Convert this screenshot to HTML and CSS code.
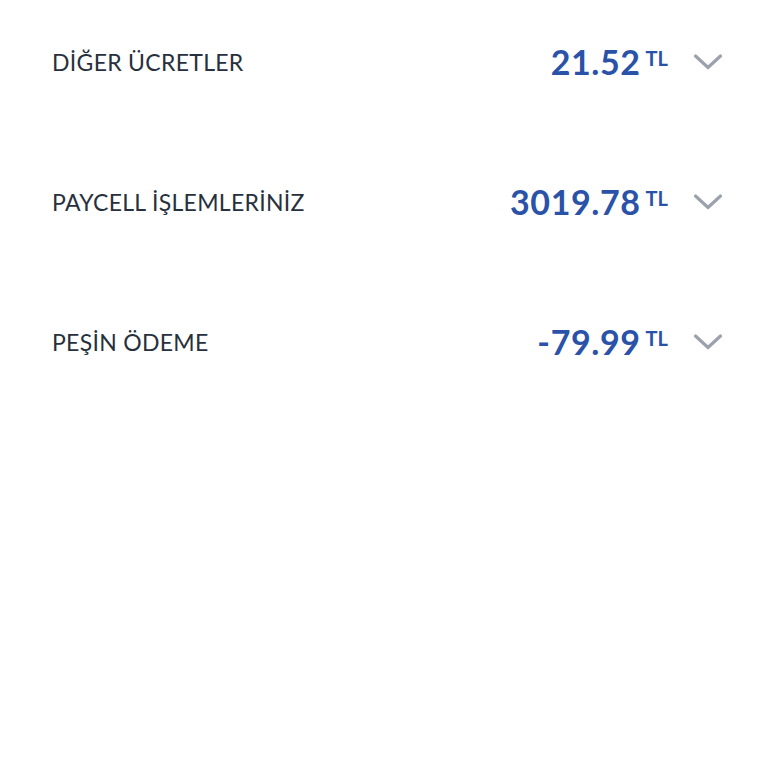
FILE: index.html
```html
<!DOCTYPE html>
<html lang="tr">
<head>
  <meta charset="UTF-8" />
  <meta name="viewport" content="width=device-width, initial-scale=1.0"/>
  <title>Fatura Detayı</title>
  <link rel="stylesheet" href="styles.css">
</head>
<body>

  <!-- Bill breakdown -->
  <div class="list">
    <div class="row">
      <span class="label">DİĞER ÜCRETLER</span>
      <div class="value">
        <span class="amount">21.52</span>
        <span class="unit">TL</span>
        <svg class="chevron" width="30" height="18" viewBox="0 0 30 18" fill="none">
          <path d="M2.5 3 L15 14.5 L27.5 3" stroke="#9ca1ae" stroke-width="3.2" stroke-linecap="round" stroke-linejoin="round"/>
        </svg>
      </div>
    </div>

    <div class="row">
      <span class="label">PAYCELL İŞLEMLERİNİZ</span>
      <div class="value">
        <span class="amount">3019.78</span>
        <span class="unit">TL</span>
        <svg class="chevron" width="30" height="18" viewBox="0 0 30 18" fill="none">
          <path d="M2.5 3 L15 14.5 L27.5 3" stroke="#9ca1ae" stroke-width="3.2" stroke-linecap="round" stroke-linejoin="round"/>
        </svg>
      </div>
    </div>

    <div class="row">
      <span class="label">PEŞİN ÖDEME</span>
      <div class="value">
        <span class="amount">-79.99</span>
        <span class="unit">TL</span>
        <svg class="chevron" width="30" height="18" viewBox="0 0 30 18" fill="none">
          <path d="M2.5 3 L15 14.5 L27.5 3" stroke="#9ca1ae" stroke-width="3.2" stroke-linecap="round" stroke-linejoin="round"/>
        </svg>
      </div>
    </div>
  </div>

</body>
</html>
```

FILE: styles.css
```css
* {
  box-sizing: border-box;
}

body {
  margin: 0;
  background: #ffffff;
  font-family: Lato, "Open Sans", sans-serif;
  color: #27303d;
}

.list {
  display: flex;
  flex-direction: column;
  gap: 80px;
  padding: 32px 45px 0 52px;
}

.row {
  display: flex;
  justify-content: space-between;
  align-items: center;
  height: 60px;
}

.label {
  font-size: 23px;
  letter-spacing: 0.3px;
}

.value {
  display: flex;
  align-items: flex-start;
}

.amount {
  font-size: 34px;
  font-weight: 700;
  color: #2952a8;
  letter-spacing: 0.6px;
  line-height: 1;
}

.unit {
  font-size: 20px;
  font-weight: 700;
  color: #2952a8;
  margin-left: 5px;
  margin-top: 3px;
  line-height: 1;
}

.chevron {
  margin-left: 25px;
  margin-top: 8px;
}
```
